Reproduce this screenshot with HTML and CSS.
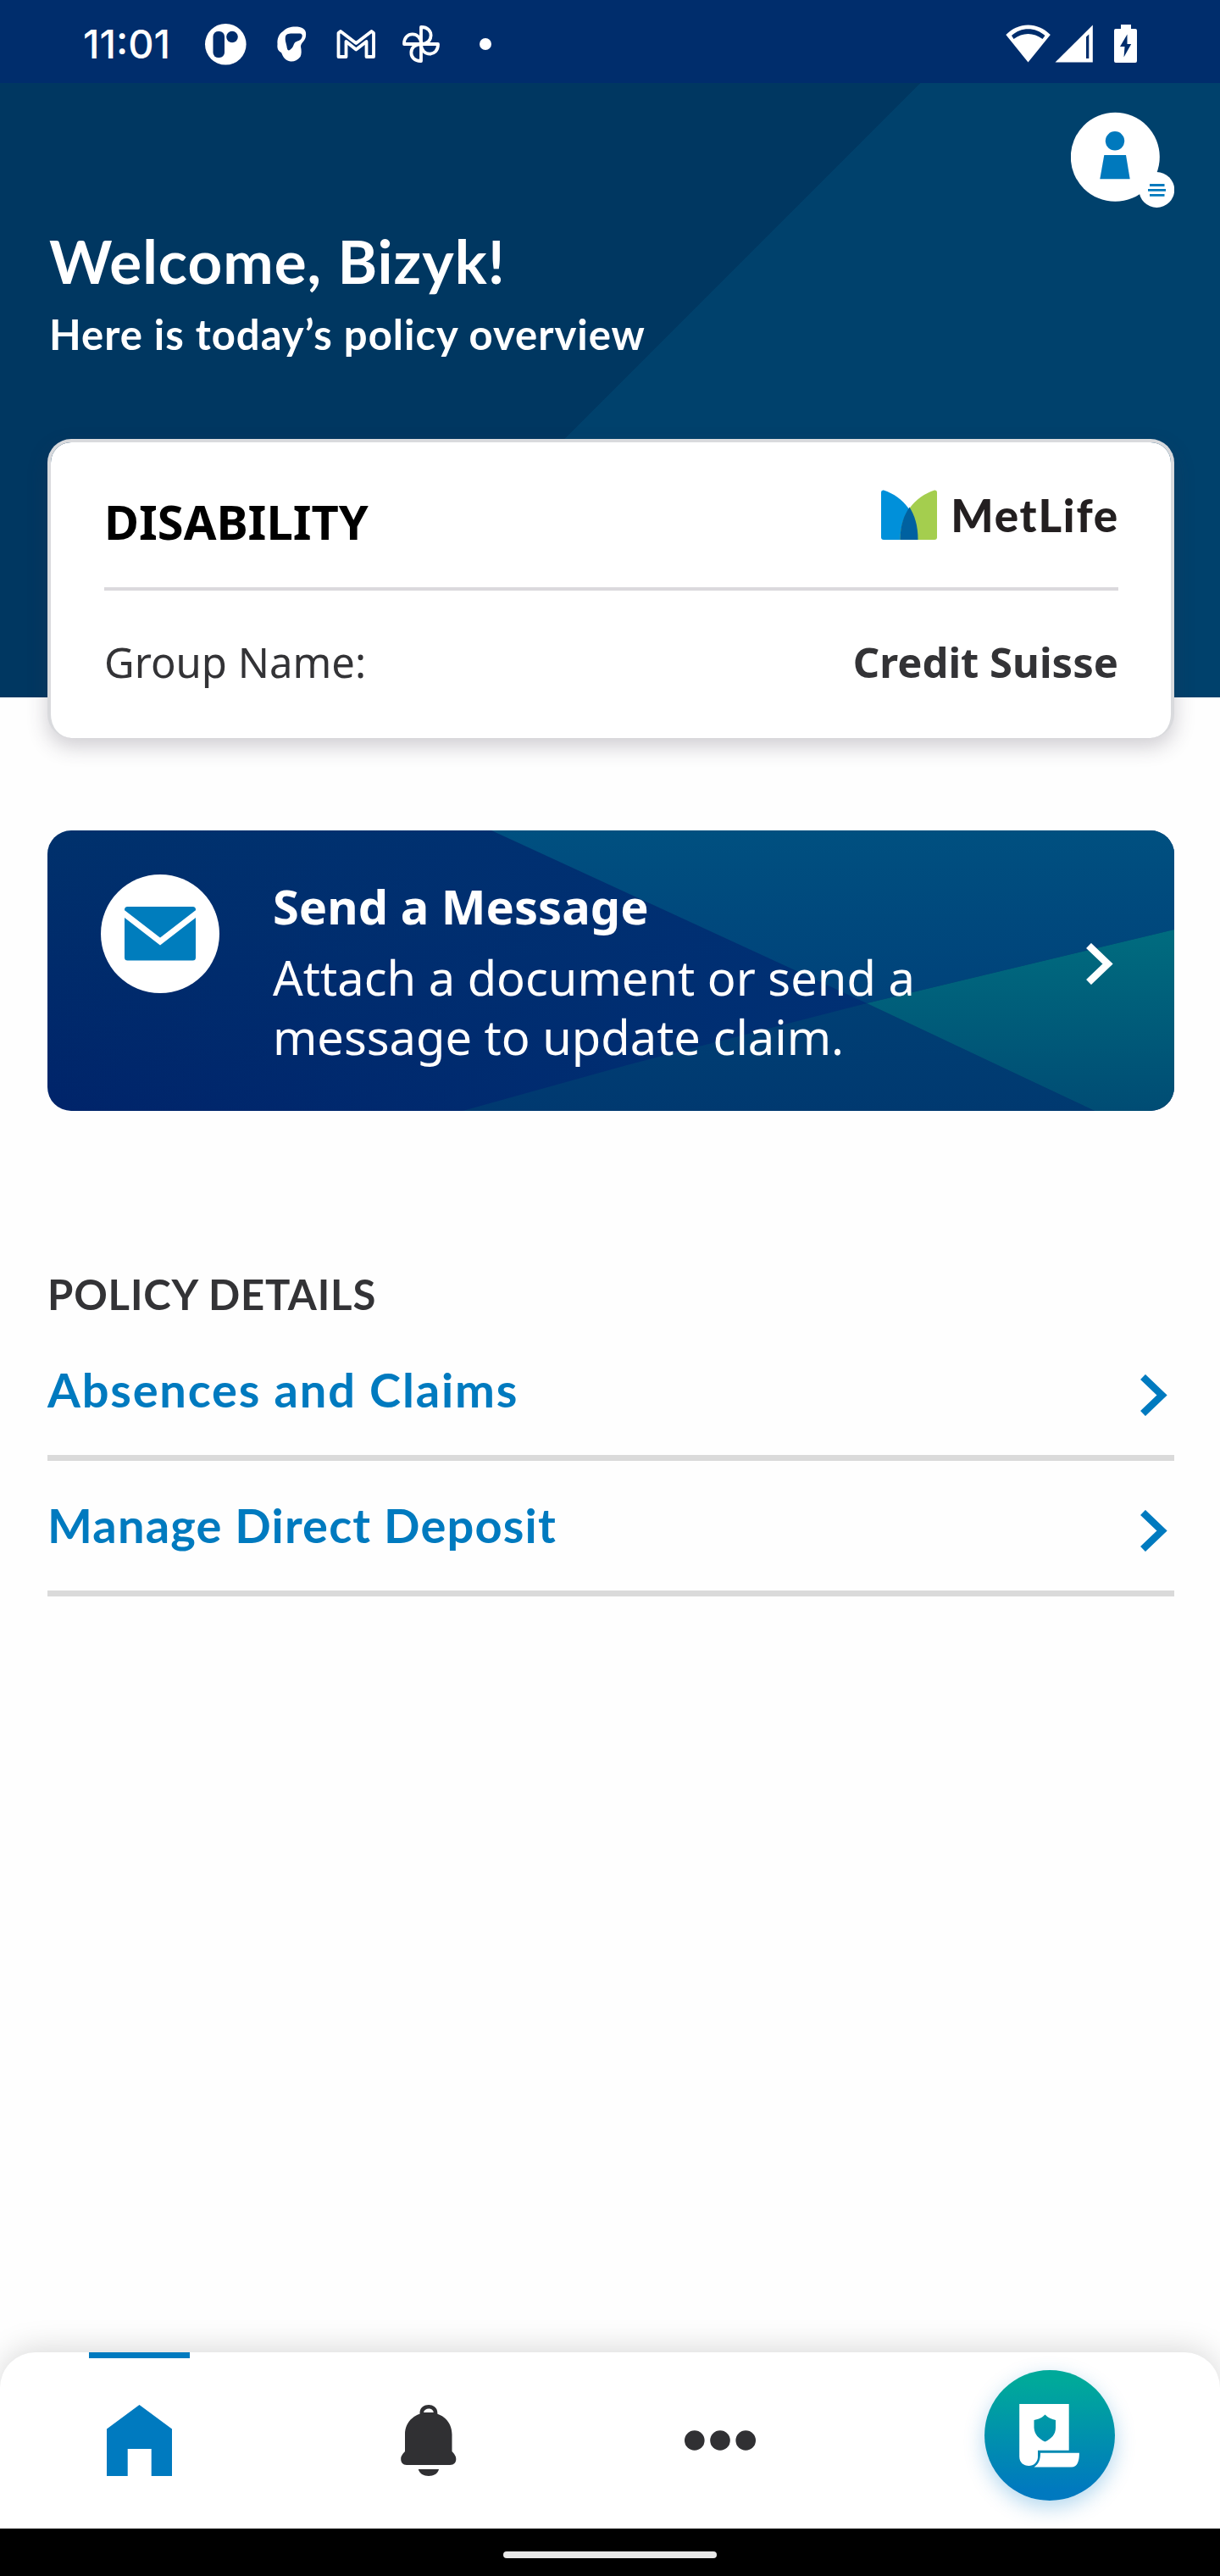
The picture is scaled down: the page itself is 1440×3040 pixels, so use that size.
FILE: index.html
```html
<!DOCTYPE html>
<html lang="en">
<head>
<meta charset="utf-8">
<title>Policy overview</title>
<link rel="stylesheet" href="styles.css">
</head>
<body>
<div class="screen">
  <div class="status-bar">
    <span class="clock">11:01</span>
    <div class="notifications">
      <svg width="50" height="50" viewBox="241 26 50 50"><circle cx="266.3" cy="51.3" r="24.3" fill="#fff"/><rect x="251.5" y="36" width="13.5" height="31" rx="6" fill="#002d6c"/><circle cx="274" cy="42.5" r="6.8" fill="#002d6c"/></svg>
      <svg width="36" height="44" viewBox="325 30 36 44"><path fill="#fff" fill-rule="evenodd" d="M333 37C337 32 344 31 350 31.500C358 32 361 37 360 42C360 48 354 50 354 55C355 60 355 64 353.500 67C350 71 346 73 342 72.500C336 72 333 67 331 62C327 60 326 57 326.500 52C326 46 328 40 333 37ZM336 43C337 39.500 341 39.500 345 39.500H353C357 40 356 44 354 46.500C351 49 348 48.500 346.500 51C345 54 345 56 341.700 58.500C338.500 61 338 58 337.500 55C337 51 335 48 336 43Z"/></svg>
      <svg width="46" height="36" viewBox="397 32 46 36"><path fill="none" stroke="#fff" stroke-width="3.800" stroke-linejoin="round" d="M399.500 37L402 35L420.300 49L438.500 35L441 37V65H432.500V47L420.300 56.500L408.500 47V65H399.500Z"/></svg>
      <svg width="46" height="46" viewBox="-23 -23 46 46"><g fill="none" stroke="#fff" stroke-width="3.800" stroke-linejoin="round"><path id="blade" d="M0 0V-20C15.500 -20.500 15.500 0 0 0Z"/><use href="#blade" transform="rotate(90)"/><use href="#blade" transform="rotate(180)"/><use href="#blade" transform="rotate(270)"/></g></svg>
      <span class="more-dot"></span>
    </div>
    <div class="system-icons">
      <svg width="54" height="46" viewBox="1188 28 54 46"><path fill="#fff" d="M1188.300 40C1203 24.500 1226 24.500 1240.800 40L1214.500 72.500Z"/><path fill="#002d6c" d="M1195 41C1206 30.500 1223 30.500 1234.500 41L1231.500 45C1221 37 1208 37 1197.500 45Z"/></svg>
      <svg width="45" height="46" viewBox="1245 28 45 46"><path fill="#fff" d="M1245.500 72.500L1289.800 28.500V72.500Z"/><path fill="#002d6c" d="M1282 42.500L1285.300 39.500V68H1282Z"/></svg>
      <svg width="28" height="46" viewBox="1315 28 28 46"><path fill="#fff" d="M1323 28H1335V33H1340Q1342 33 1342 35V71Q1342 73 1340 73H1317Q1315 73 1315 71V35Q1315 33 1317 33H1323Z"/><path fill="#002d6c" d="M1330.500 39.500L1322 54H1327.500L1326.500 66.500L1335.200 51H1330.500Z"/></svg>
    </div>
  </div>

  <header class="hero">
    <button class="profile" aria-label="Profile menu">
      <svg width="122" height="114" viewBox="1264 132 122 114"><circle cx="1316.300" cy="185.300" r="52.500" fill="#fff"/><circle cx="1316" cy="166.300" r="11.200" fill="#0079bd"/><path fill="#0079bd" d="M1303.300 183H1329L1333.700 211.200H1298.300Z"/><circle cx="1365.300" cy="224" r="20.900" fill="#fff"/><path stroke="#0079bd" stroke-width="2.800" d="M1357 218.500H1374.500M1355 224.400H1376M1357 230.300H1374.500"/></svg>
    </button>
    <h1 class="welcome">Welcome, Bizyk!</h1>
    <p class="subtitle">Here is today’s policy overview</p>
  </header>

  <main class="content">
    <section class="policy-card">
      <div class="policy-head">
        <h2 class="policy-type">DISABILITY</h2>
        <div class="brand">
          <svg width="66" height="60" viewBox="0 0 66 60"><path fill="#0090da" d="M0 3Q0 0 3 .500C26 8 43 28 43.500 59H3Q0 59 0 56Z"/><path fill="#a4ce4e" d="M66 3Q66 0 63 .500C40 8 22.500 28 22.500 59H63Q66 59 66 56Z"/><path fill="#0061a0" d="M33.500 20.500C39.500 30 43.500 42 43.500 59H22.500C22.500 42 27 30 33.500 20.500Z"/></svg>
          <span class="brand-name">MetLife</span>
        </div>
      </div>
      <div class="policy-row">
        <span>Group Name:</span>
        <strong>Credit Suisse</strong>
      </div>
    </section>

    <a class="message-card">
      <svg class="message-bg" viewBox="0 0 1330 331" preserveAspectRatio="none">
        <defs>
          <linearGradient id="navy" x1="0" y1="0" x2="0" y2="1"><stop offset="0" stop-color="#00316c"/><stop offset="1" stop-color="#00246a"/></linearGradient>
          <linearGradient id="sea" x1="0" y1="0" x2="0" y2="1"><stop offset="0" stop-color="#005080"/><stop offset="1" stop-color="#00427a"/></linearGradient>
          <linearGradient id="teal" x1="0" y1="0" x2="0" y2="1"><stop offset="0" stop-color="#006c7f"/><stop offset="1" stop-color="#004c74"/></linearGradient>
          <linearGradient id="mid" x1="0" y1="0" x2="0" y2="1"><stop offset="0" stop-color="#003f74"/><stop offset="1" stop-color="#003970"/></linearGradient>
          <linearGradient id="core" x1="0" y1="0" x2="1" y2="0"><stop offset="0" stop-color="#003074" stop-opacity="0"/><stop offset="1" stop-color="#003074"/></linearGradient>
        </defs>
        <rect width="1330" height="331" fill="url(#navy)"/>
        <path fill="url(#core)" d="M0 0H524L967 204L500 331H0Z"/>
        <path fill="url(#sea)" d="M524 0H1330V117L967 204Z"/>
        <path fill="url(#mid)" d="M967 204L684 277L490 331H1236Z"/>
        <path fill="url(#teal)" d="M1330 117V331H1236L967 204Z"/>
      </svg>
      <span class="message-icon">
        <svg width="84" height="64" viewBox="0 0 84 64"><rect width="84" height="63.500" rx="3.500" fill="#007dbd"/><path fill="none" stroke="#fff" stroke-width="7" d="M-2 7L42 41L86 7"/></svg>
      </span>
      <span class="message-text">
        <strong class="message-title">Send a Message</strong>
        <span class="message-body">Attach a document or send a message to update claim.</span>
      </span>
      <svg class="message-arrow" width="32" height="49" viewBox="0 0 32 49"><path fill="none" stroke="#fff" stroke-width="8.500" d="M3 3L25.500 24.500L3 46"/></svg>
    </a>

    <section class="details">
      <h3 class="details-title">POLICY DETAILS</h3>
      <a class="detail-link"><span class="absences">Absences and Claims</span>
        <svg class="chevron" width="32" height="49" viewBox="0 0 32 49"><path fill="none" stroke="#007abf" stroke-width="8.500" d="M3 3L25.500 24.500L3 46"/></svg></a>
      <a class="detail-link"><span class="deposit">Manage Direct Deposit</span>
        <svg class="chevron" width="32" height="49" viewBox="0 0 32 49"><path fill="none" stroke="#007abf" stroke-width="8.500" d="M3 3L25.500 24.500L3 46"/></svg></a>
    </section>
  </main>

  <nav class="tab-bar">
    <a class="tab active" aria-label="Home"><svg width="77" height="84" viewBox="126 2838 77 84"><path fill="#007abf" d="M164.500 2838L203 2866.500V2922H178.700V2890H150.700V2922H126V2866.500Z"/></svg></a>
    <a class="tab" aria-label="Notifications"><svg width="66" height="84" viewBox="473 2838 66 84"><g fill="#303033"><path fill-rule="evenodd" d="M495.500 2852V2847C496 2835 516 2835 516.300 2847V2852ZM500 2847H511.800C511 2841 501 2841 500 2847Z"/><path d="M478 2873C478 2856 492 2847 505.700 2847C520 2847 533.500 2856 533.500 2873V2893C536 2896 538.300 2898 538.300 2902C538.300 2906 536 2909 531 2909H480C475.500 2909 473.200 2906 473.200 2902C473.200 2898 475.500 2896 478 2893Z"/><path d="M493.800 2914H518C517 2919 512 2922 506 2922S495 2919 493.800 2914Z"/></g></svg></a>
    <a class="tab" aria-label="More"><svg width="86" height="26" viewBox="-43 -13 86 26" fill="#303033"><circle cx="-30.200" r="11.800"/><circle r="11.800"/><circle cx="30.200" r="11.800"/></svg></a>
    <a class="tab tab-policy" aria-label="Policy"><span class="fab"><svg width="154" height="154" viewBox="1162 2797 154 154"><path fill="#fff" fill-rule="evenodd" d="M1203.200 2837H1261.700V2891.700H1225V2900C1224.500 2906 1220 2910 1214.500 2910C1208 2910 1203.200 2906 1203.200 2899ZM1233.500 2849.600C1230 2853.500 1226 2855 1220.500 2856V2865C1221 2873 1226 2878 1233.500 2881.600C1241 2878 1246 2873 1246 2865V2856C1241 2855 1237 2853.500 1233.500 2849.600Z"/><path fill="#fff" d="M1228 2894.700H1273.900C1274 2904 1272 2911.500 1264.500 2911.500H1220.500C1226 2907.500 1228 2903 1228 2894.700Z"/></svg></span></a>
  </nav>
  <div class="system-nav"><span class="home-indicator"></span></div>
</div>
</body>
</html>
```
FILE: styles.css
```css
* { box-sizing: border-box; }

body { margin: 0; background: #fefefe; }

h1, h2, h3, p { margin: 0; }

svg { display: block; flex: none; }

.screen {
  width: 1440px;
  height: 3040px;
  display: flex;
  flex-direction: column;
  overflow: hidden;
  font-family: Lato, "Liberation Sans", sans-serif;
}

/* Status bar */
.status-bar {
  flex: none;
  height: 98px;
  padding: 5px 97px 0 98px;
  background: #002d6c;
  display: flex;
  align-items: center;
}

.clock {
  width: 143px;
  font: 500 47px/56px Inter, "Liberation Sans", sans-serif;
  color: #fff;
}

.notifications { display: flex; align-items: center; gap: 35px; }
.notifications svg:nth-child(4) { margin-left: -4px; }
.more-dot { width: 14px; height: 14px; margin-left: 11px; border-radius: 50%; background: #fff; }

.system-icons { margin-left: auto; display: flex; }
.system-icons svg:nth-child(2) { margin-left: 4px; }
.system-icons svg:nth-child(3) { margin-left: 25px; }

/* Welcome banner */
.hero {
  flex: none;
  height: 725px;
  padding: 34px 54px 0 58px;
  background: linear-gradient(135deg, #003761 50.160%, #00416c 50.200%);
  color: #fff;
}

.profile {
  display: block;
  margin-left: auto;
  padding: 0;
  border: 0;
  background: none;
}

.welcome { margin-top: 20px; font-size: 71px; line-height: 84px; letter-spacing: 1px; }
.subtitle { margin-top: 14px; font-size: 49px; font-weight: 700; line-height: 60px; letter-spacing: 1px; }

/* Content */
.content {
  position: relative;
  flex: 1;
  margin-top: -305px;
  padding: 0 54px 0 56px;
  display: flex;
  flex-direction: column;
}

.policy-card {
  height: 353px;
  padding: 0 62px 0 63px;
  border: 4px solid #d9dadd;
  border-bottom: 0;
  border-radius: 28px;
  background: #fff;
  background-clip: padding-box;
  box-shadow: 0 10px 24px rgba(60, 50, 70, 0.24);
  font-family: "Noto Sans", "Open Sans", sans-serif;
}

.policy-head {
  height: 175px;
  padding-top: 55px;
  border-bottom: 4px solid #dbd9dd;
  display: flex;
  justify-content: space-between;
}

.policy-type { font-size: 56px; line-height: 76px; color: #000; }

.brand { display: flex; align-items: flex-start; gap: 16px; margin-right: -1px; }
.brand svg { margin-top: 1px; }
.brand-name { margin-top: 1px; font: 900 53px/60px Lato, sans-serif; letter-spacing: 1.800px; color: #231f20; }

.policy-row {
  padding-top: 51px;
  display: flex;
  justify-content: space-between;
  font-size: 49px;
  line-height: 66px;
  color: #333336;
}

/* Send a message */
.message-card {
  position: relative;
  height: 331px;
  margin-top: 109px;
  padding: 52px 72px 0 63px;
  border-radius: 28px;
  overflow: hidden;
  display: flex;
  align-items: flex-start;
  color: #fff;
  font-family: "Noto Sans", "Open Sans", sans-serif;
}

.message-bg { position: absolute; inset: 0; width: 100%; height: 100%; }

.message-icon {
  position: relative;
  flex: none;
  width: 140px;
  height: 140px;
  border-radius: 50%;
  background: #fff;
  display: flex;
  align-items: center;
  justify-content: center;
}

.message-text {
  position: relative;
  width: 800px;
  margin: 2px 0 0 63px;
  display: flex;
  flex-direction: column;
  gap: 14px;
  font-size: 56px;
  line-height: 70px;
}

.message-arrow { position: relative; margin: 81px 0 0 auto; }

/* Policy details */
.details { margin-top: 186px; }

.details-title {
  margin-bottom: 7px;
  font-size: 49px;
  line-height: 60px;
  letter-spacing: 0.850px;
  color: #333336;
}

.detail-link {
  height: 160px;
  padding: 42px 8px 0 0;
  border-bottom: 7px solid #dadada;
  display: flex;
  justify-content: space-between;
  align-items: flex-start;
  font-size: 56px;
  font-weight: 700;
  line-height: 68px;
  color: #007abf;
}

.absences { letter-spacing: 1.800px; }
.deposit { letter-spacing: 1.150px; }
.chevron { margin-top: 16px; }

/* Bottom tabs */
.tab-bar {
  position: relative;
  flex: none;
  height: 208px;
  border-radius: 42px 42px 0 0;
  background: #fff;
  box-shadow: 0 -4px 36px rgba(0, 0, 0, 0.15);
  display: grid;
  grid-template-columns: 329px 353px 336px 422px;
}

.tab { position: relative; display: flex; align-items: center; justify-content: center; }

.tab.active::before {
  content: "";
  position: absolute;
  top: 0;
  left: 105px;
  width: 119px;
  height: 7px;
  background: #007abf;
}

.tab-policy { padding: 0 0 12px 20px; }

.fab {
  width: 154px;
  height: 154px;
  border-radius: 50%;
  background: linear-gradient(#00a99a 8%, #0079bf 92%);
  box-shadow: 0 8px 24px rgba(0, 122, 200, 0.3);
}

.system-nav {
  position: relative;
  flex: none;
  height: 56px;
  background: #000;
  display: flex;
  justify-content: center;
  padding-top: 27px;
}

.home-indicator { width: 252px; height: 8px; border-radius: 4px; background: #e8e8e8; }
```
